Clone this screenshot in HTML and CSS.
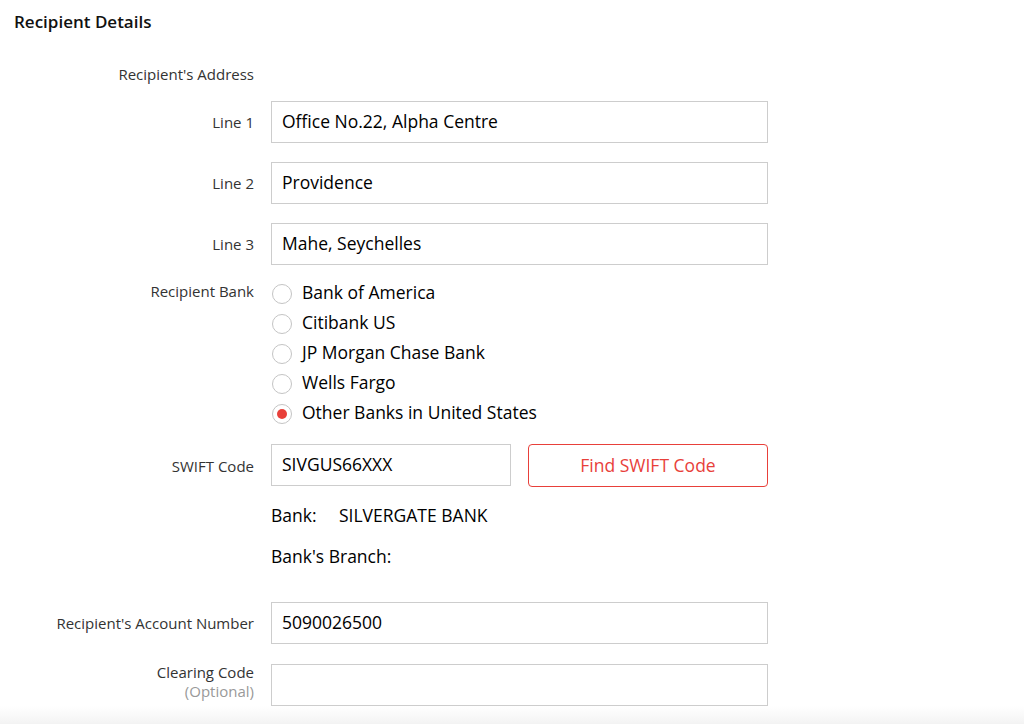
FILE: index.html
```html
<!DOCTYPE html>
<html lang="en">
  <head>
    <meta charset="UTF-8" />
    <meta name="viewport" content="width=device-width, initial-scale=1.0" />
    <title>Recipient Details</title>
    <link rel="stylesheet" href="styles.css">
  </head>
  <body>
    <div class="page">
      <h2 class="title">Recipient Details</h2>

      <form class="form" onsubmit="return false">
        <!-- Address block -->
        <div class="row heading-row">
          <div class="label">Recipient's Address</div>
          <div></div>
        </div>

        <div class="row field-row">
          <label class="label" for="line1">Line 1</label>
          <input class="input" type="text" id="line1" value="Office No.22, Alpha Centre" />
        </div>
        <div class="row field-row">
          <label class="label" for="line2">Line 2</label>
          <input class="input" type="text" id="line2" value="Providence" />
        </div>
        <div class="row field-row">
          <label class="label" for="line3">Line 3</label>
          <input class="input" type="text" id="line3" value="Mahe, Seychelles" />
        </div>

        <!-- Bank choice -->
        <div class="row bank-row">
          <div class="label">Recipient Bank</div>
          <div class="radios">
            <label class="radio"><span class="dot"></span>Bank of America</label>
            <label class="radio"><span class="dot"></span>Citibank US</label>
            <label class="radio"><span class="dot"></span>JP Morgan Chase Bank</label>
            <label class="radio"><span class="dot"></span>Wells Fargo</label>
            <label class="radio"><span class="dot checked"></span>Other Banks in United States</label>
          </div>
        </div>

        <div class="row swift-row">
          <label class="label" for="swift">SWIFT Code</label>
          <div class="swift">
            <input class="input" type="text" id="swift" value="SIVGUS66XXX" />
            <button type="button" class="find">Find SWIFT Code</button>
          </div>
        </div>

        <div class="row info-row">
          <div></div>
          <div class="info"><span class="info-key">Bank:</span>SILVERGATE BANK</div>
        </div>
        <div class="row info-row">
          <div></div>
          <div class="info">Bank's Branch:</div>
        </div>

        <div class="row field-row account-row">
          <label class="label" for="account">Recipient's Account Number</label>
          <input class="input" type="text" id="account" value="5090026500" />
        </div>
        <div class="row field-row">
          <label class="label clearing" for="clearing">Clearing Code<span class="optional">(Optional)</span></label>
          <input class="input" type="text" id="clearing" value="" />
        </div>
      </form>
    </div>
  </body>
</html>
```

FILE: styles.css
```css
/* Page base */
body {
  margin: 0;
  background-color: #fff;
  font-family: "Open Sans", "Noto Sans", sans-serif;
  color: #333;
}

.page {
  min-height: 724px;
  box-sizing: border-box;
  padding: 10px 0 0 14px;
  background: linear-gradient(to bottom, #fff 0, #fff 706px, #f3f3f3 724px);
}

.title {
  margin: 0 0 31px;
  font-size: 17px;
  font-weight: 600;
  color: #111;
}

/* Two-column form grid */
.row {
  display: grid;
  grid-template-columns: 240px 497px;
  column-gap: 17px;
}

.label {
  text-align: right;
  font-size: 15px;
  color: #333;
}

.heading-row {
  margin-bottom: 17px;
}

.field-row {
  align-items: center;
  margin-bottom: 19px;
}

.input {
  width: 100%;
  height: 42px;
  box-sizing: border-box;
  padding: 0 10px 3px;
  font-family: inherit;
  font-size: 17.5px;
  color: #000;
  border: 1px solid #cdcdcd;
  border-radius: 0;
  outline: none;
}

/* Radio list */
.bank-row {
  margin-top: -7px;
  margin-bottom: 17px;
}

.bank-row .label {
  padding-top: 4px;
}

.radios {
  display: flex;
  flex-direction: column;
}

.radio {
  display: flex;
  align-items: center;
  height: 30px;
  font-size: 17.5px;
  color: #000;
}

.dot {
  width: 18px;
  height: 18px;
  margin: 3px 10px 0 1px;
  border: 1px solid #c4c4c4;
  border-radius: 50%;
  display: flex;
  align-items: center;
  justify-content: center;
}

.dot.checked::after {
  content: "";
  width: 10px;
  height: 10px;
  border-radius: 50%;
  background-color: #e8403a;
}

/* SWIFT lookup */
.swift-row {
  align-items: center;
  margin-bottom: 16px;
}

.swift {
  display: grid;
  grid-template-columns: 240px 240px;
  column-gap: 17px;
}

.find {
  height: 43px;
  padding-bottom: 3px;
  border: 1px solid #e8403a;
  border-radius: 4px;
  background-color: #fff;
  color: #e8403a;
  font-family: inherit;
  font-size: 17.5px;
  cursor: pointer;
}

.info-row {
  margin-bottom: 17px;
}

.info {
  font-size: 17.5px;
  color: #000;
}

.info-key {
  display: inline-block;
  width: 68px;
}

.account-row {
  margin-top: 34px;
  margin-bottom: 20px;
}

.clearing {
  display: flex;
  flex-direction: column;
  align-self: start;
  margin-top: -1px;
  line-height: 19px;
}

.optional {
  color: #999;
}
```
